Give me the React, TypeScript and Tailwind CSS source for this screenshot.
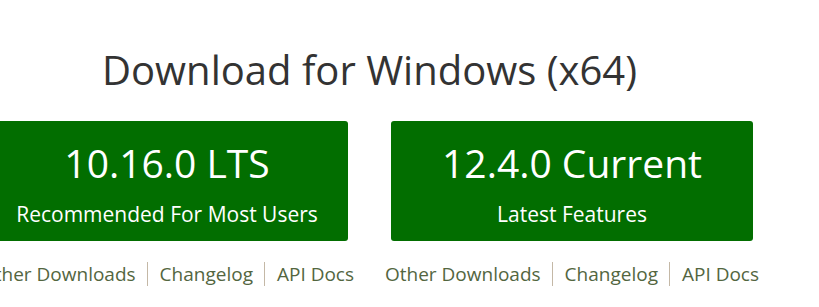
import React from "react";

type Release = {
    version: string;
    label: string;
};

const releases: Release[] = [
    { version: "10.16.0 LTS", label: "Recommended For Most Users" },
    { version: "12.4.0 Current", label: "Latest Features" },
];

const links = ["Other Downloads", "Changelog", "API Docs"];

function DownloadColumn({ release }: { release: Release }) {
    return (
        <div className="flex flex-col items-center w-[362px]">
            <a className="flex flex-col items-center w-full h-[120px] rounded-[3px] bg-[#026e00] text-white pt-[18px]">
                <span className="text-[39px] leading-[48px]">{release.version}</span>
                <span className="text-[21px] leading-[28px] mt-[13px]">{release.label}</span>
            </a>
            <div className="flex items-center mt-[21px] text-[19px] leading-[24px] text-[#53663f] whitespace-nowrap">
                {links.map((l, i) => (
                    <React.Fragment key={l}>
                        {i > 0 && <span className="ml-[11px] mr-[12px] h-[24px] border-l border-[#c4b8a6]" />}
                        <span>{l}</span>
                    </React.Fragment>
                ))}
            </div>
        </div>
    );
}

export default function App() {
    return (
        <div className="w-[819px] h-[307px] bg-white overflow-hidden" style={{ fontFamily: '"Open Sans", sans-serif' }}>
            <div className="flex flex-col items-center w-[767px] -ml-[14px] pt-[46px]">
                <h1 className="text-[40px] leading-[48px] text-[#333]">Download for Windows (x64)</h1>
                <div className="flex gap-[43px] mt-[27px]">
                    {releases.map((r) => (
                        <DownloadColumn key={r.version} release={r} />
                    ))}
                </div>
            </div>
        </div>
    );
}
